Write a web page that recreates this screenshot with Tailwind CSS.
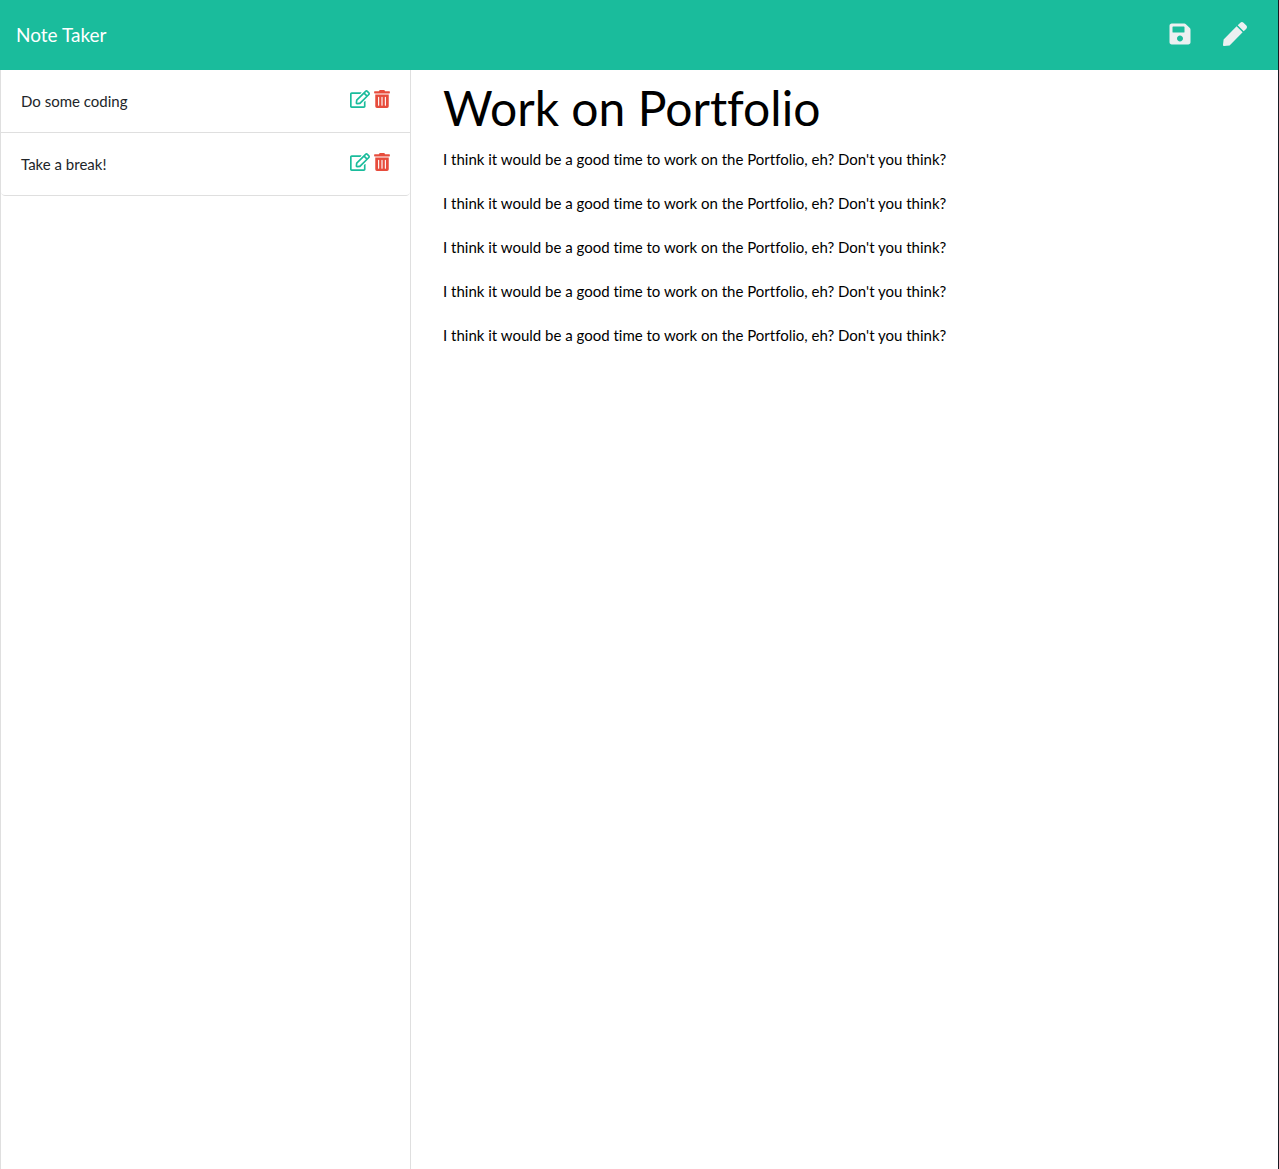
<!DOCTYPE html>
<html lang="en">
<head>
<meta charset="utf-8">
<title>Note Taker</title>
<script src="https://cdn.jsdelivr.net/npm/@tailwindcss/browser@4"></script>
</head>
<body class="flex min-h-screen flex-col border-r border-[#171a23] bg-white font-['Lato',sans-serif] text-[15px] text-[#212529] [font-variant-ligatures:none]">
<svg class="hidden">
  <symbol id="edit" viewBox="0 0 576 512"><path d="M402.300 344.900l32-32c5-5 13.700-1.500 13.700 5.700V464c0 26.500-21.500 48-48 48H48c-26.500 0-48-21.500-48-48V112c0-26.500 21.500-48 48-48h273.500c7.100 0 10.700 8.600 5.700 13.700l-32 32c-1.500 1.500-3.500 2.300-5.700 2.300H48v352h352V350.500c0-2.100.8-4.100 2.300-5.600zm156.600-201.800L296.300 405.700l-90.400 10c-26.200 2.900-48.500-19.200-45.600-45.600l10-90.400L432.900 17.100c22.900-22.900 59.900-22.900 82.700 0l43.200 43.200c22.900 22.900 22.900 60 .1 82.800zM460.100 174L402 115.900 216.200 301.800l-7.300 65.300 65.300-7.300L460.100 174zm64.800-79.700l-43.200-43.200c-4.100-4.100-10.800-4.100-14.800 0L436 82l58.100 58.100 30.900-30.900c4-4.200 4-10.800-.1-14.900z"/></symbol>
  <symbol id="trash" viewBox="0 0 448 512"><path d="M32 464a48 48 0 0 0 48 48h288a48 48 0 0 0 48-48V128H32zm272-256a16 16 0 0 1 32 0v224a16 16 0 0 1-32 0zm-96 0a16 16 0 0 1 32 0v224a16 16 0 0 1-32 0zm-96 0a16 16 0 0 1 32 0v224a16 16 0 0 1-32 0zM432 32H312l-9.400-18.700A24 24 0 0 0 281.100 0H166.800a23.720 23.720 0 0 0-21.400 13.300L136 32H16A16 16 0 0 0 0 48v32a16 16 0 0 0 16 16h416a16 16 0 0 0 16-16V48a16 16 0 0 0-16-16z"/></symbol>
</svg>
<header class="flex h-[70px] items-center justify-between bg-[#1abc9c] px-4">
  <a href="#" class="text-[19px] leading-7 text-white">Note Taker</a>
  <div class="flex items-center gap-8 pr-[15px] pb-[2px] text-[#ecf0f1]">
    <button type="button" aria-label="Save note"><svg class="h-6 w-[22px] fill-current" viewBox="0 0 448 512"><path d="M433.941 129.941l-83.882-83.882A48 48 0 0 0 316.118 32H48C21.490 32 0 53.490 0 80v352c0 26.510 21.490 48 48 48h352c26.510 0 48-21.490 48-48V163.882a48 48 0 0 0-14.059-33.941zM224 416c-35.346 0-64-28.654-64-64 0-35.346 28.654-64 64-64s64 28.654 64 64c0 35.346-28.654 64-64 64zm96-304.520V212c0 6.627-5.373 12-12 12H76c-6.627 0-12-5.373-12-12V108c0-6.627 5.373-12 12-12h228.520c3.183 0 6.235 1.264 8.485 3.515l3.480 3.480A11.996 11.996 0 0 1 320 111.480z"/></svg></button>
    <button type="button" aria-label="New note"><svg class="size-6 fill-current" viewBox="0 0 512 512"><path d="M290.740 93.240l128.020 128.020-277.990 277.990-114.140 12.600C11.350 513.540-1.560 500.620.14 485.340l12.700-114.220 277.900-277.880zm207.200-19.060l-60.110-60.110c-18.750-18.750-49.160-18.750-67.910 0l-56.550 56.550 128.020 128.020 56.550-56.550c18.750-18.760 18.750-49.160 0-67.910z"/></svg></button>
  </div>
</header>
<div class="flex grow">
  <aside class="w-[411px] shrink-0 border-x border-[#dfdfdf]">
    <ul class="overflow-hidden rounded-b">
      <li class="flex items-start justify-between border-b border-[#dfdfdf] px-5 py-5 leading-[22px]">
        <span>Do some coding</span>
        <span class="flex gap-1">
          <button type="button" aria-label="Edit Do some coding" class="text-[#1abc9c]"><svg class="h-[18px] w-5 fill-current"><use href="#edit"/></svg></button>
          <button type="button" aria-label="Delete Do some coding" class="text-[#e74c3c]"><svg class="h-[18px] w-4 fill-current"><use href="#trash"/></svg></button>
        </span>
      </li>
      <li class="flex items-start justify-between rounded-b border-b border-[#dfdfdf] px-5 py-5 leading-[22px]">
        <span>Take a break!</span>
        <span class="flex gap-1">
          <button type="button" aria-label="Edit Take a break!" class="text-[#1abc9c]"><svg class="h-[18px] w-5 fill-current"><use href="#edit"/></svg></button>
          <button type="button" aria-label="Delete Take a break!" class="text-[#e74c3c]"><svg class="h-[18px] w-4 fill-current"><use href="#trash"/></svg></button>
        </span>
      </li>
    </ul>
  </aside>
  <main class="grow px-8 pt-2 text-black">
    <h1 class="text-5xl leading-[60px]">Work on Portfolio</h1>
    <div class="mt-[10px] flex flex-col gap-[22px] leading-[22px]">
      <p>I think it would be a good time to work on the Portfolio, eh? Don't you think?</p>
      <p>I think it would be a good time to work on the Portfolio, eh? Don't you think?</p>
      <p>I think it would be a good time to work on the Portfolio, eh? Don't you think?</p>
      <p>I think it would be a good time to work on the Portfolio, eh? Don't you think?</p>
      <p>I think it would be a good time to work on the Portfolio, eh? Don't you think?</p>
    </div>
  </main>
</div>
</body>
</html>
